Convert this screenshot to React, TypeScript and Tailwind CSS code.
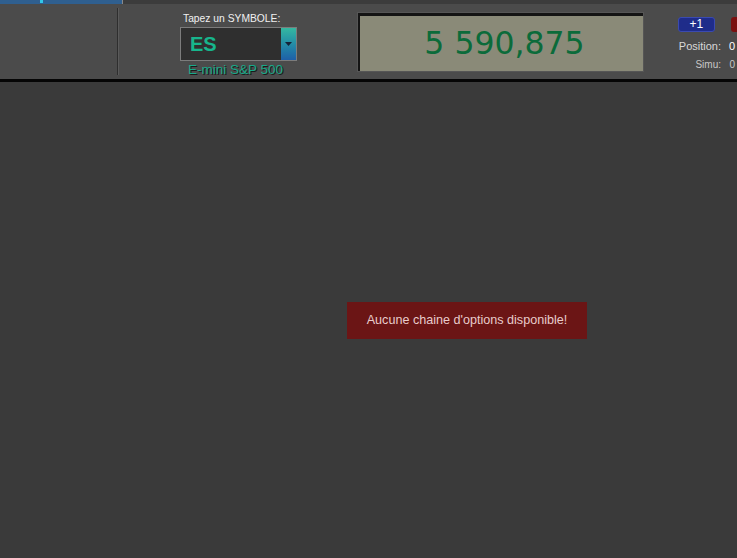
// App.tsx — options chain panel, empty state

export default function App() {
  return (
    <main
      className="w-[737px] h-[558px] overflow-hidden bg-[#3a3a3a] flex flex-col"
      style={{ fontFamily: "'Liberation Sans', Arial, sans-serif" }}
    >
      {/* Tab strip */}
      <div className="h-[4px] flex shrink-0 bg-[#3c3c3c]">
        <div className="w-[122px] bg-[#2f5f8f] relative">
          <div className="absolute left-[40px] top-0 w-[3px] h-[3px] bg-[#31c8e8]" />
        </div>
        <div className="w-px bg-[#8a8a8a]" />
      </div>

      {/* Header */}
      <div className="h-[78px] bg-[#4b4b4b] flex shrink-0 border-b-[3px] border-[#050505]">
        <div className="w-[117px] shrink-0" />
        <div className="w-[2px] shrink-0 my-[4px] bg-[#2e2e2e] border-r border-[#5a5a5a]" />

        {/* Symbol input */}
        <div className="ml-[61px] w-[117px] shrink-0 flex flex-col">
          <div className="mt-[8px] ml-[3px] text-[10.3px] leading-[13px] text-[#f0f0f0]">Tapez un SYMBOLE:</div>
          <div className="mt-[2px] h-[34px] flex border border-[#7c7c7c] bg-[#2f2f2f]">
            <div className="flex-1 pl-[9px] flex items-center text-[20px] font-bold text-[#17b58c]">ES</div>
            <div className="w-[15px] flex items-center justify-center bg-gradient-to-b from-[#35b8a0] to-[#1f5fa8]">
              <svg width="7" height="4" viewBox="0 0 7 4">
                <path d="M0 0h7L3.5 4z" fill="#152238" />
              </svg>
            </div>
          </div>
          <div
            className="text-center text-[13.5px] leading-[15px] mt-[1px] pr-[6px] text-[#19a98a]"
            style={{ textShadow: "1px 1px 0 #1a1a1a" }}
          >
            E-mini S&amp;P 500
          </div>
        </div>

        {/* Price display */}
        <div className="ml-[60px] mt-[8px] w-[287px] shrink-0 h-[60px] bg-[#565656] p-px">
          <div className="h-full border-t-[3px] border-l-[2px] border-[#141414] bg-[#8a8a78] flex items-center justify-center">
            <span className="text-[31.5px] leading-none text-[#0b6b3a] ml-[6px]" style={{ fontFamily: "'DejaVu Sans', sans-serif" }}>
              5 590,875
            </span>
          </div>
        </div>

        {/* Position */}
        <div className="ml-[34px] w-[60px] shrink-0 flex flex-col text-[11px] text-[#e4e4e4]">
          <div className="mt-[13px] flex w-full">
            <div className="w-[40px] h-[15px] rounded-[3px] bg-[#1f2c8a] border border-[#3a4ab0] text-white text-[12px] leading-[13px] text-center">
              +1
            </div>
            <div className="ml-[16px] w-[8px] h-[15px] rounded-l-[3px] bg-[#7a1010]" />
          </div>
          <div className="mt-[6px] flex w-full justify-end">
            <span className="text-[#d8d8d8]">Position:</span>
            <span className="w-[17px] text-right pr-[3px] text-white">0</span>
          </div>
          <div className="mt-[2px] flex w-full justify-end text-[10px]">
            <span className="text-[#c8c8c8]">Simu:</span>
            <span className="w-[17px] text-right pr-[3px] text-[#c8c8c8]">0</span>
          </div>
        </div>
      </div>

      {/* Body */}
      <div className="flex-1 flex items-center justify-center">
        <div className="ml-[197px] w-[240px] h-[37px] bg-[#6b1515] flex items-center justify-center text-[12.6px] text-[#e8cccc]">
          Aucune chaine d'options disponible!
        </div>
      </div>
    </main>
  );
}
